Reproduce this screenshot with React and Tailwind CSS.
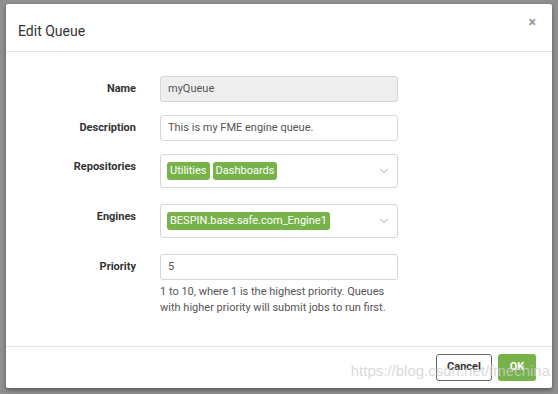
import { ChevronDown } from "lucide-react"

function Tag({ children }) {
  return (
    <span className="rounded-[3px] bg-[#78b24a] px-[3px] py-[1px] text-[11px] leading-[16px] text-white">{children}</span>
  )
}

function Row({ label, children, className = "" }) {
  return (
    <div className={`flex ${className}`}>
      <div className="w-[130px] shrink-0 pt-[6px] text-right text-[11px] font-bold leading-[14px] text-[#333]">{label}</div>
      <div className="ml-[24px] w-[238px]">{children}</div>
    </div>
  )
}

export default function App() {
  return (
    <div className="h-[394px] w-[558px] bg-[#8f8f8f] pl-[6px] pt-[4px] font-['Roboto',sans-serif]">
      <div className="relative flex h-[384px] w-[546px] flex-col rounded-[2px] bg-white shadow-[0_2px_4px_rgba(0,0,0,0.4)]">
        <div className="flex h-[48px] items-start justify-between border-b border-[#e5e5e5] pl-[12px] pr-[16px]">
          <h1 className="pt-[17px] text-[14px] leading-[20px] text-[#333]">Edit Queue</h1>
          <span className="pt-[10px] text-[14px] font-bold leading-[16px] text-[#999]">×</span>
        </div>

        <div className="flex-1 border-b border-[#e5e5e5] pt-[24px]">
          <Row label="Name">
            <div className="flex h-[26px] items-center rounded-[3px] border border-[#d6d6d6] bg-[#eeeeee] px-[7px] text-[11px] text-[#555]">myQueue</div>
          </Row>
          <Row label="Description" className="mt-[13px]">
            <div className="flex h-[26px] items-center rounded-[3px] border border-[#d6d6d6] bg-white px-[7px] text-[11px] text-[#555]">This is my FME engine queue.</div>
          </Row>
          <Row label="Repositories" className="mt-[13px]">
            <div className="flex h-[34px] items-center justify-between rounded-[3px] border border-[#d6d6d6] bg-white pl-[6px] pr-[6px]">
              <div className="flex gap-[3px]">
                <Tag>Utilities</Tag>
                <Tag>Dashboards</Tag>
              </div>
              <ChevronDown size={14} strokeWidth={1.5} className="text-[#999]" />
            </div>
          </Row>
          <Row label="Engines" className="mt-[16px]">
            <div className="flex h-[34px] items-center justify-between rounded-[3px] border border-[#d6d6d6] bg-white pl-[6px] pr-[6px]">
              <Tag>BESPIN.base.safe.com_Engine1</Tag>
              <ChevronDown size={14} strokeWidth={1.5} className="text-[#999]" />
            </div>
          </Row>
          <Row label="Priority" className="mt-[16px]">
            <div className="flex h-[26px] items-center rounded-[3px] border border-[#d6d6d6] bg-white px-[7px] text-[11px] text-[#555]">5</div>
            <p className="mt-[4px] text-[11px] leading-[16px] text-[#555]">
              1 to 10, where 1 is the highest priority. Queues with higher priority will submit jobs to run first.
            </p>
          </Row>
        </div>

        <div className="flex h-[41px] items-start justify-end gap-[6px] pr-[16px] pt-[7px]">
          <button className="h-[27px] w-[56px] rounded-[3px] border border-[#666] bg-white text-[11px] font-bold text-[#333]">Cancel</button>
          <button className="h-[27px] w-[38px] rounded-[3px] bg-[#78b24a] text-[11px] font-bold text-white">OK</button>
        </div>

        <span className="pointer-events-none absolute bottom-[8px] right-[2px] font-['Liberation_Sans',sans-serif] text-[15px] leading-[18px] text-[#cfcfcf]/80">https://blog.csdn.net/fmechina</span>
      </div>
    </div>
  )
}
